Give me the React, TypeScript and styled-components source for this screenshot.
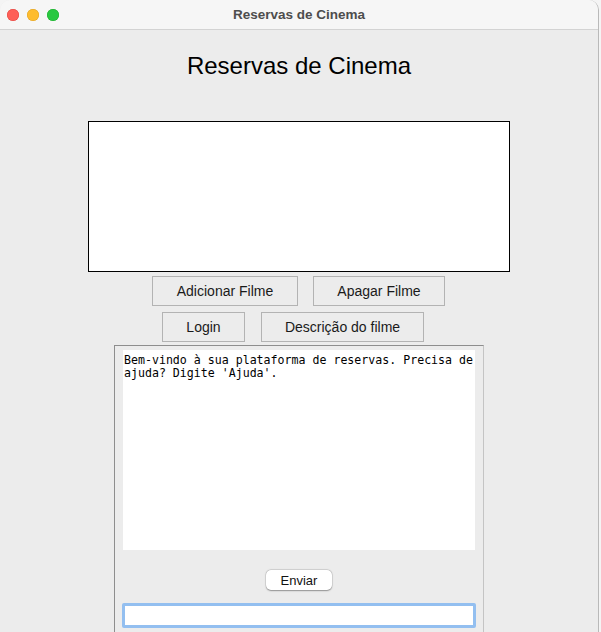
import styled, { createGlobalStyle } from 'styled-components';

const GlobalStyle = createGlobalStyle`
  html, body {
    margin: 0;
    padding: 0;
    background: #f4f4f4;
    overflow: hidden;
  }
  #root {
    width: 601px;
    height: 632px;
  }
`;

const Window = styled.div`
  width: 598px;
  height: 632px;
  background: #ececec;
  border-right: 1px solid #b9b9b9;
  border-top-left-radius: 10px;
  border-top-right-radius: 10px;
  overflow: hidden;
  display: flex;
  flex-direction: column;
  font-family: 'Liberation Sans', Arial, sans-serif;
`;

const TitleBar = styled.header`
  position: relative;
  height: 29px;
  flex-shrink: 0;
  background: #f6f6f6;
  border-bottom: 1px solid #d3d3d3;
  display: flex;
  align-items: center;
  justify-content: center;
`;

const Lights = styled.div`
  position: absolute;
  left: 7px;
  top: 9px;
  display: flex;
  gap: 8px;
`;

const Light = styled.span<{ $color: string; $edge: string }>`
  width: 12px;
  height: 12px;
  border-radius: 50%;
  background: ${({ $color }) => $color};
  box-shadow: inset 0 0 0 0.5px ${({ $edge }) => $edge};
`;

const WindowTitle = styled.span`
  font-size: 13.5px;
  font-weight: bold;
  color: #4d4d4d;
`;

const Content = styled.main`
  flex: 1;
  display: flex;
  flex-direction: column;
  align-items: center;
`;

const Heading = styled.h1`
  margin: 22px 0 0;
  font-size: 24px;
  line-height: 28px;
  font-weight: normal;
  color: #000;
`;

const MovieList = styled.div`
  margin-top: 41px;
  width: 420px;
  height: 149px;
  background: #fff;
  border: 1px solid #000;
`;

const ButtonRow = styled.div<{ $gap: number; $shift: number; $top: number }>`
  display: flex;
  gap: ${({ $gap }) => $gap}px;
  margin-top: ${({ $top }) => $top}px;
  padding-right: ${({ $shift }) => $shift}px;
`;

const FlatButton = styled.button<{ $width: number }>`
  width: ${({ $width }) => $width}px;
  height: 30px;
  padding: 0;
  background: #ececec;
  border: 1px solid #b3b3b3;
  font-family: 'Liberation Sans', Arial, sans-serif;
  font-size: 14px;
  color: #1a1a1a;
`;

const ChatFrame = styled.section`
  margin-top: 3px;
  width: 368px;
  flex: 1;
  border-top: 1px solid #8e8e8e;
  border-left: 1px solid #8e8e8e;
  border-right: 1px solid #c4c4c4;
  display: flex;
  flex-direction: column;
  align-items: center;
  padding-top: 4px;
`;

const ChatLog = styled.div`
  width: 352px;
  height: 200px;
  box-sizing: border-box;
  padding: 4px 0 0 1px;
  background: #fff;
  font-family: 'DejaVu Sans Mono', monospace;
  font-size: 11.6px;
  line-height: 13px;
  color: #000;
  white-space: pre;
  overflow: hidden;
`;

const SendButton = styled.button`
  margin-top: 20px;
  width: 66px;
  height: 20px;
  padding: 0;
  background: #fff;
  border: none;
  border-radius: 5px;
  box-shadow: 0 0.5px 1.5px rgba(0, 0, 0, 0.35), 0 0 0 0.5px rgba(0, 0, 0, 0.12);
  font-family: 'Liberation Sans', Arial, sans-serif;
  font-size: 13px;
  color: #111;
`;

const MessageInput = styled.input`
  margin-top: 13px;
  width: 354px;
  height: 25px;
  box-sizing: border-box;
  background: #fff;
  border: 3px solid #93bff0;
  border-radius: 2px;
  outline: none;
`;

export default function App() {
  return (
    <>
      <GlobalStyle />
      <Window>
        <TitleBar>
          <Lights>
            <Light $color="#fe5f57" $edge="#e0443e" />
            <Light $color="#febc2e" $edge="#dea123" />
            <Light $color="#28c840" $edge="#1aab29" />
          </Lights>
          <WindowTitle>Reservas de Cinema</WindowTitle>
        </TitleBar>
        <Content>
          <Heading>Reservas de Cinema</Heading>
          <MovieList />
          <ButtonRow $gap={15} $shift={1} $top={4}>
            <FlatButton $width={146}>Adicionar Filme</FlatButton>
            <FlatButton $width={132}>Apagar Filme</FlatButton>
          </ButtonRow>
          <ButtonRow $gap={16} $shift={12} $top={6}>
            <FlatButton $width={83}>Login</FlatButton>
            <FlatButton $width={163}>Descrição do filme</FlatButton>
          </ButtonRow>
          <ChatFrame>
            <ChatLog>
              {"Bem-vindo à sua plataforma de reservas. Precisa de\najuda? Digite 'Ajuda'."}
            </ChatLog>
            <SendButton>Enviar</SendButton>
            <MessageInput />
          </ChatFrame>
        </Content>
      </Window>
    </>
  );
}
